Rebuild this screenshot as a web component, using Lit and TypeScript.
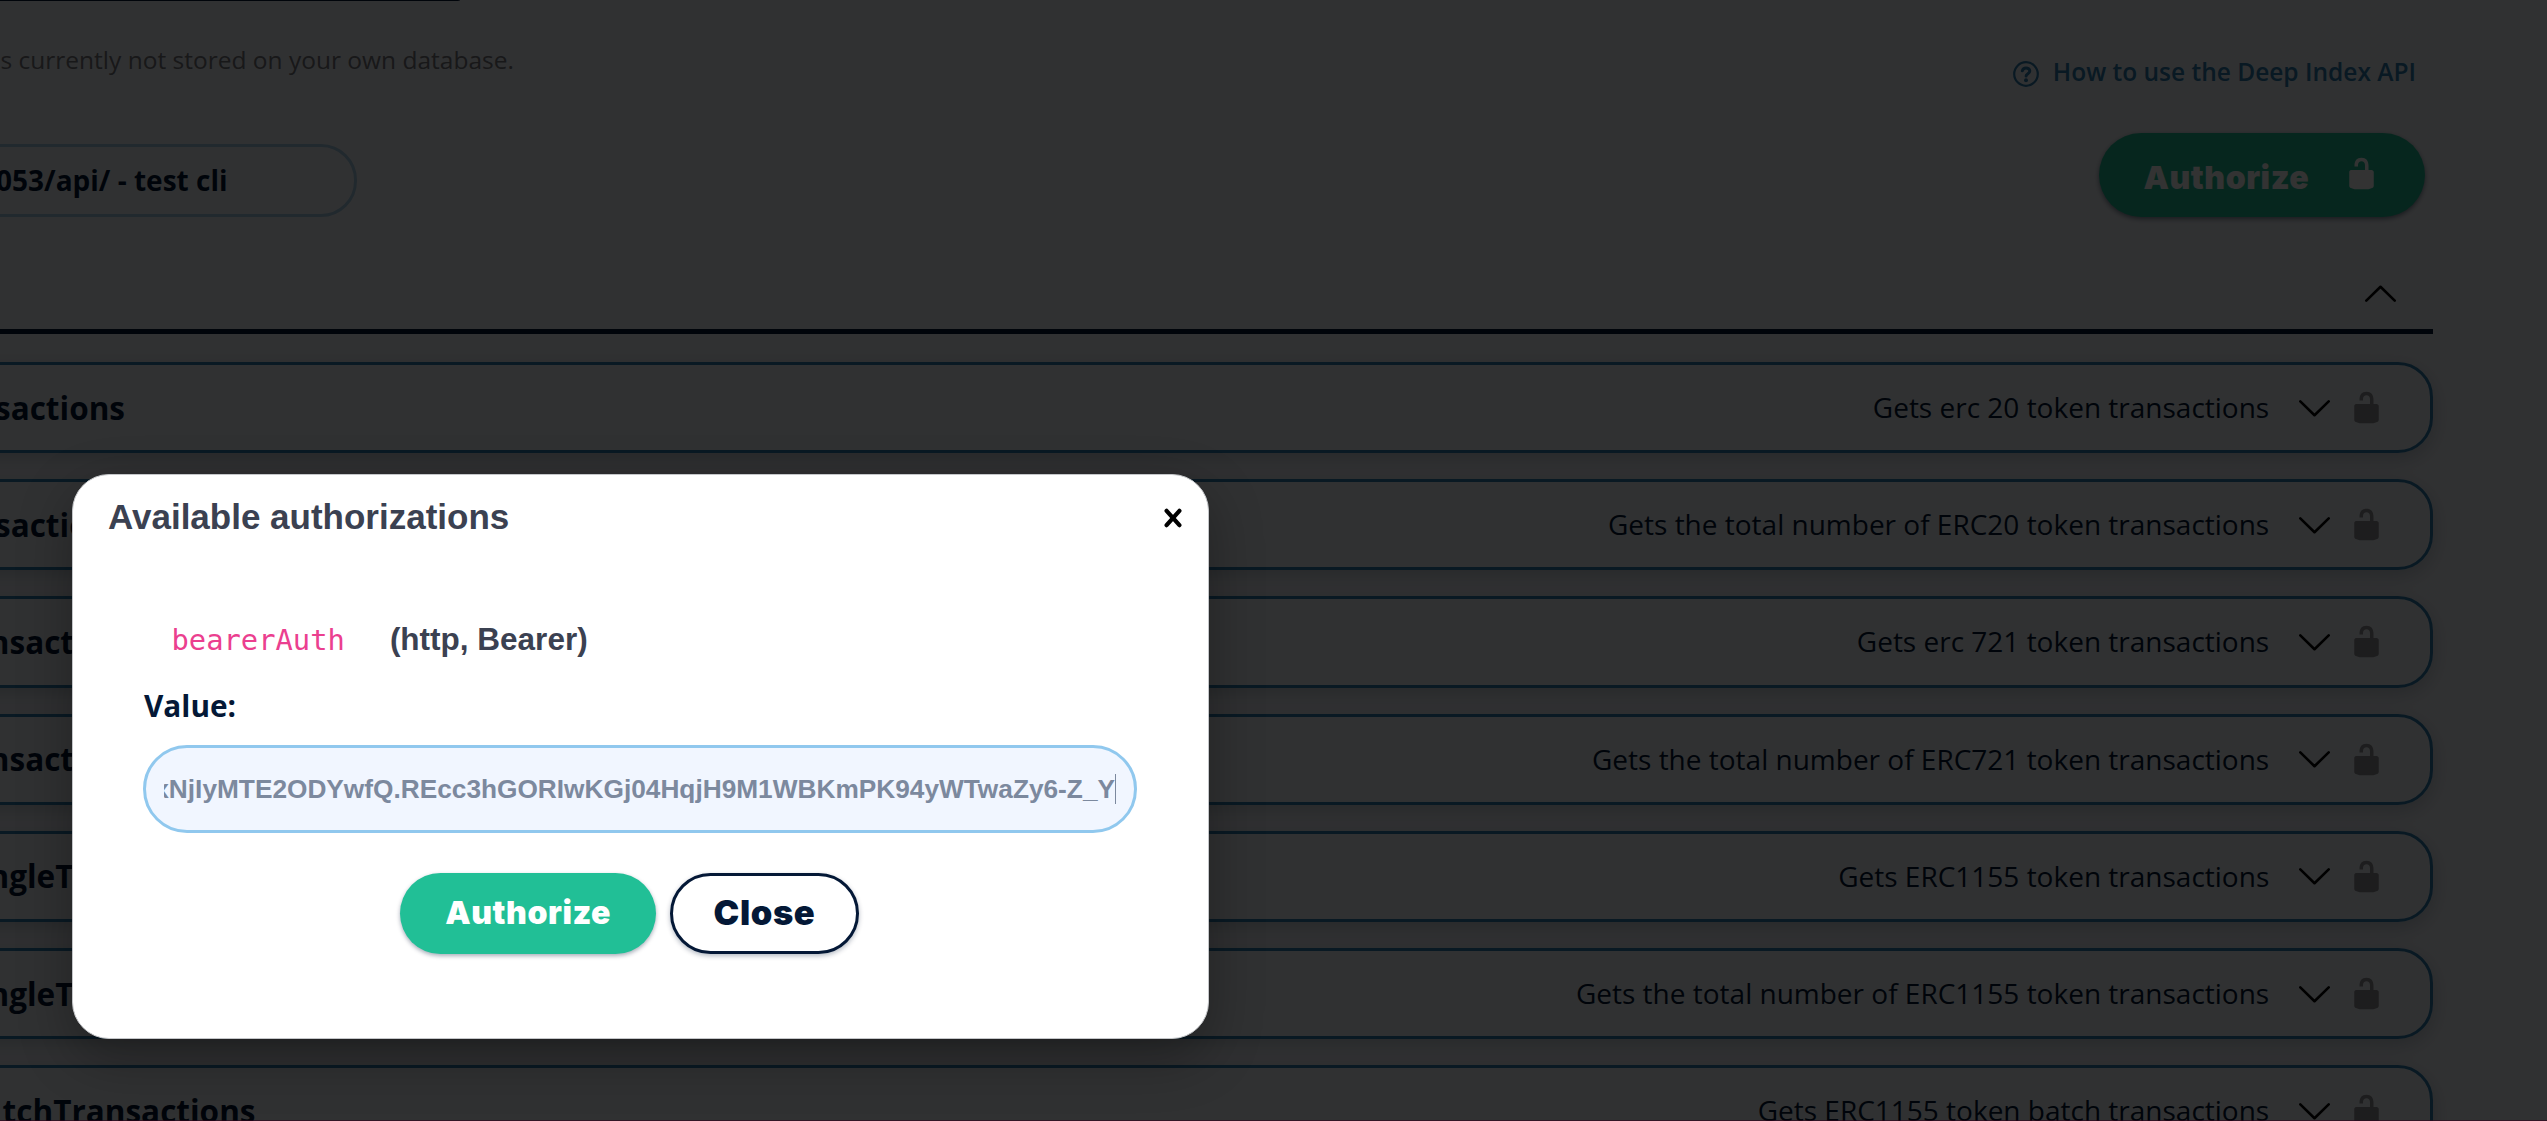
import { LitElement, html, css, svg } from "lit";
import { customElement } from "lit/decorators.js";

interface Operation {
  name: string;
  // Distance from the left viewport edge to the end of the operation name.
  reach: number;
  summary: string;
}

const operations: Operation[] = [
  { name: "sactions", reach: 125, summary: "Gets erc 20 token transactions" },
  { name: "sactions", reach: 125, summary: "Gets the total number of ERC20 token transactions" },
  { name: "nsactions", reach: 139.5, summary: "Gets erc 721 token transactions" },
  { name: "nsactions", reach: 139.5, summary: "Gets the total number of ERC721 token transactions" },
  { name: "ngleTransactions", reach: 257.5, summary: "Gets ERC1155 token transactions" },
  { name: "ngleTransactions", reach: 257.5, summary: "Gets the total number of ERC1155 token transactions" },
  { name: "tchTransactions", reach: 255.5, summary: "Gets ERC1155 token batch transactions" },
];

const lock = html`<svg class="lock" viewBox="0 0 20 20">${svg`<path d="M15.8 8H14V5.6C14 2.703 12.665 1 10 1 7.334 1 6 2.703 6 5.6V6h2v-.801C8 3.754 8.797 3 10 3c1.203 0 2 .754 2 2.199V8H4c-.553 0-1 .646-1 1.199V17c0 .549.428 1.139.951 1.307l1.197.387C5.672 18.861 6.55 19 7.1 19h5.8c.549 0 1.428-.139 1.951-.307l1.196-.387c.524-.167.953-.757.953-1.306V9.199C17 8.646 16.352 8 15.8 8z"/>`}</svg>`;

const caretDown = html`<svg class="caret" viewBox="0 0 31 17"><path d="M1.3 1.4 15.5 15.2 29.7 1.4" /></svg>`;
const caretUp = html`<svg class="caret" viewBox="0 0 31 17"><path d="M1.3 15.6 15.5 1.8 29.7 15.6" /></svg>`;

@customElement("app-root")
export class AppRoot extends LitElement {
  static styles = css`
    :host {
      display: block;
      position: relative;
      width: 100%;
      height: 1121px;
      overflow: hidden;
      background: #f1f5fa;
      color: #041836;
      font-family: "Open Sans", "Noto Sans", sans-serif;
    }
    * {
      box-sizing: border-box;
    }
    .page {
      display: flex;
      flex-direction: column;
      padding-right: 114px;
    }
    .banner {
      width: 460px;
      height: 1px;
      background: #041836;
      border-bottom-right-radius: 4px 1px;
    }
    .intro {
      display: flex;
      justify-content: space-between;
      height: 132px;
    }
    .note {
      margin: 39px 0 0;
      padding-left: 0.5px;
      font-size: 24.5px;
      line-height: 40px;
      font-weight: 400;
      color: #78787e;
    }
    .help {
      display: flex;
      align-items: center;
      gap: 13.8px;
      height: 40px;
      margin: 51px 17px 0 0;
      color: #2e7daf;
      font-size: 24.5px;
      line-height: 40px;
      font-weight: 600;
    }
    .help svg {
      width: 26px;
      height: 26px;
      margin-top: 4px;
    }
    .bar {
      display: flex;
      justify-content: space-between;
      align-items: flex-end;
      height: 84px;
    }
    .server {
      display: flex;
      justify-content: flex-end;
      align-items: center;
      width: 397px;
      height: 73px;
      margin-left: -40px;
      padding: 0 126.5px 1px 0;
      border: 3px solid #a6cbe3;
      border-radius: 36px;
      font-size: 28px;
      font-weight: 700;
      white-space: nowrap;
    }
    .unlock {
      display: flex;
      justify-content: space-between;
      align-items: center;
      width: 326px;
      height: 84px;
      margin-right: 8px;
      padding: 0 46.2px 0 44.5px;
      border-radius: 42px;
      background: #21bf96;
      fill: #fff;
      box-shadow: 0 2px 5px rgba(4, 24, 54, 0.5);
    }
    .unlock .label {
      padding-top: 5px;
    }
    .unlock .lock {
      margin-top: -2.5px;
    }
    .label {
      font-family: Inter, sans-serif;
      font-weight: 900;
      font-size: 32px;
      letter-spacing: 0.55px;
      color: #fff;
    }
    .lock {
      width: 35px;
      height: 35px;
      flex: none;
    }
    .tag {
      display: flex;
      justify-content: flex-end;
      align-items: center;
      height: 117px;
      padding: 40.6px 37px 0 0;
      border-bottom: 5px solid #041836;
    }
    .caret {
      width: 31px;
      height: 17px;
      flex: none;
      fill: none;
      stroke: #000;
      stroke-width: 2.6;
      stroke-linecap: round;
      stroke-linejoin: round;
    }
    .list {
      display: flex;
      flex-direction: column;
      gap: 26px;
      margin-top: 27.95px;
    }
    .op {
      display: flex;
      align-items: center;
      flex: none;
      height: 91.23px;
      margin-left: -60px;
      padding: 0 46.1px 0 57px;
      border: 3px solid #2e7daf;
      border-radius: 35px;
      box-shadow: 0 6px 20px rgba(4, 24, 54, 0.2);
      white-space: nowrap;
    }
    .name {
      display: flex;
      justify-content: flex-end;
      padding-bottom: 1px;
      font-size: 31.5px;
      font-weight: 700;
    }
    .summary {
      margin: 0 30px 0 auto;
      padding-bottom: 1px;
      font-size: 28px;
      font-weight: 400;
    }
    .op .caret {
      margin-top: 1px;
    }
    .op .lock {
      margin-left: 18.7px;
      opacity: 0.4;
    }
    .shade {
      position: absolute;
      inset: 0;
      background: rgba(0, 0, 0, 0.8);
    }
    .edge {
      position: absolute;
      inset: auto 0 0 0;
      height: 1px;
      background: rgba(50, 5, 30, 0.6);
    }
    .modal {
      position: absolute;
      left: 72px;
      top: 474px;
      width: 1137px;
      height: 565px;
      border: 1px solid #c4c6c9;
      border-radius: 37px;
      background: #fff;
      box-shadow: 0 18px 54px rgba(0, 0, 0, 0.3);
      font-family: "Liberation Sans", Arial, sans-serif;
      color: #3b4151;
    }
    .head {
      display: flex;
      justify-content: space-between;
      align-items: center;
      height: 84px;
      padding: 0 26.5px 0 35px;
      font-size: 35px;
      font-weight: 700;
    }
    .head svg {
      width: 18px;
      height: 20px;
      margin-top: 1px;
    }
    .scheme {
      display: flex;
      align-items: center;
      gap: 45px;
      height: 70px;
      margin-top: 45px;
      padding-left: 98.5px;
      font-size: 31.5px;
      font-weight: 700;
    }
    .scheme code {
      padding-top: 1px;
      font: 400 28.8px "DejaVu Sans Mono", monospace;
      color: #eb3f8f;
    }
    .field {
      margin: 12.4px 0 0 71px;
      font: 700 29.75px/40px "Open Sans", sans-serif;
      color: #041836;
    }
    .value {
      display: flex;
      justify-content: flex-end;
      align-items: center;
      width: 994px;
      height: 88px;
      margin: 18.6px 0 0 70px;
      padding: 0 18px;
      border: 3px solid #90c8ee;
      border-radius: 44px;
      background: #f1f6ff;
    }
    .clip {
      display: flex;
      justify-content: flex-end;
      align-items: center;
      width: 100%;
      overflow: hidden;
      color: #7c899e;
      font-size: 26.25px;
      font-weight: 700;
      white-space: nowrap;
    }
    .clip span {
      padding-top: 1.5px;
    }
    .cursor {
      flex: none;
      width: 1px;
      height: 30px;
      background: #7c899e;
    }
    .actions {
      display: flex;
      gap: 13.7px;
      margin: 40px 0 0 327px;
    }
    .button {
      display: flex;
      align-items: center;
      justify-content: center;
      width: 256.3px;
      height: 81px;
      padding-bottom: 1px;
      border-radius: 40.5px;
      background: #21bf96;
      box-shadow: 0 2px 4px rgba(4, 24, 54, 0.35);
    }
    .button.close {
      width: 189px;
      border: 3px solid #041836;
      background: #fff;
      box-shadow: 0 2px 5px rgba(4, 24, 54, 0.3);
    }
    .close .label {
      font-size: 34.5px;
      letter-spacing: 0.6px;
      color: #041836;
    }
  `;

  render() {
    return html`
      <div class="page">
        <div class="banner"></div>
        <div class="intro">
          <p class="note">s currently not stored on your own database.</p>
          <div class="help">
            <svg viewBox="0 0 26 26" fill="none" stroke="#2e7daf" stroke-width="2.2">
              <circle cx="13" cy="13" r="11.8" />
              <path d="M9.3 9.8c.5-2 1.9-2.9 3.7-2.9 2 0 3.8 1.2 3.8 3.1 0 2.7-3.7 2.6-3.7 5.1" stroke-width="3" stroke-linecap="round" />
              <circle cx="13" cy="19.2" r="2" fill="#2e7daf" stroke="none" />
            </svg>
            <span>How to use the Deep Index API</span>
          </div>
        </div>
        <div class="bar">
          <div class="server">053/api/ - test cli</div>
          <div class="unlock"><span class="label">Authorize</span>${lock}</div>
        </div>
        <div class="tag">${caretUp}</div>
        <div class="list">
          ${operations.map(
            (op) => html`<div class="op">
              <div class="name" style="width:${op.reach}px">${op.name}</div>
              <div class="summary">${op.summary}</div>
              ${caretDown}${lock}
            </div>`
          )}
        </div>
      </div>
      <div class="shade"></div>
      <div class="edge"></div>
      <div class="modal">
        <div class="head">
          <span>Available authorizations</span>
          <svg viewBox="0 0 18 20"><path d="M2.6 2.8 15.4 17.2M15.4 2.8 2.6 17.2" stroke="#000" stroke-width="4.2" stroke-linecap="round" /></svg>
        </div>
        <div class="scheme"><code>bearerAuth</code><span>(http, Bearer)</span></div>
        <div class="field">Value:</div>
        <div class="value">
          <div class="clip">
            <span>xNjIyMTE2ODYwfQ.REcc3hGORIwKGj04HqjH9M1WBKmPK94yWTwaZy6-Z_Y</span>
            <i class="cursor"></i>
          </div>
        </div>
        <div class="actions">
          <div class="button"><span class="label">Authorize</span></div>
          <div class="button close"><span class="label">Close</span></div>
        </div>
      </div>
    `;
  }
}
